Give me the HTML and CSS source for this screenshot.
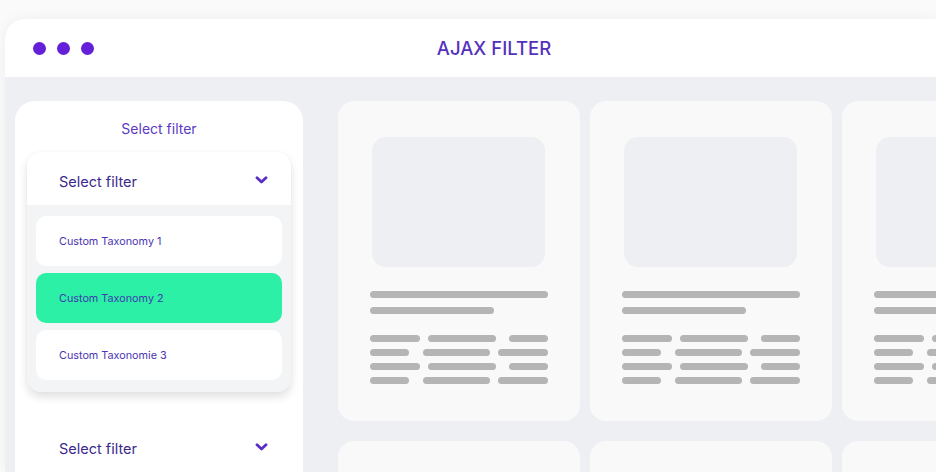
FILE: index.html
```html
<!DOCTYPE html>
<html lang="en">
<head>
<meta charset="utf-8">
<title>Ajax Filter</title>
<link rel="stylesheet" href="styles.css">
</head>
<body>
<div class="window">
  <header class="titlebar">
    <div class="dots"><span class="dot"></span><span class="dot"></span><span class="dot"></span></div>
    <h1 class="title">AJAX FILTER</h1>
  </header>
  <div class="content">
    <aside class="sidebar">
      <div class="sidebar-label">Select filter</div>
      <div class="dropdown open">
        <div class="dropdown-head">
          <span>Select filter</span>
          <svg class="chev" width="13" height="8" viewBox="0 0 13 8"><path d="M2 1.8 L6.5 6 L11 1.8" fill="none" stroke="#5a2dc9" stroke-width="2.8" stroke-linecap="round" stroke-linejoin="round"/></svg>
        </div>
        <ul class="options">
          <li class="option">Custom Taxonomy 1</li>
          <li class="option active">Custom Taxonomy 2</li>
          <li class="option">Custom Taxonomie 3</li>
        </ul>
      </div>
      <div class="dropdown closed">
        <div class="dropdown-head">
          <span>Select filter</span>
          <svg class="chev" width="13" height="8" viewBox="0 0 13 8"><path d="M2 1.8 L6.5 6 L11 1.8" fill="none" stroke="#5a2dc9" stroke-width="2.8" stroke-linecap="round" stroke-linejoin="round"/></svg>
        </div>
      </div>
    </aside>
    <main class="grid">
      <div class="card">
        <div class="thumb"></div>
        <div class="lines title-lines"><i class="l w178"></i><i class="l w124"></i></div>
        <div class="rows">
          <div class="row a"><i class="l"></i><i class="l"></i><i class="l"></i></div>
          <div class="row b"><i class="l"></i><i class="l"></i><i class="l"></i></div>
          <div class="row a"><i class="l"></i><i class="l"></i><i class="l"></i></div>
          <div class="row b"><i class="l"></i><i class="l"></i><i class="l"></i></div>
        </div>
      </div>
      <div class="card">
        <div class="thumb"></div>
        <div class="lines title-lines"><i class="l w178"></i><i class="l w124"></i></div>
        <div class="rows">
          <div class="row a"><i class="l"></i><i class="l"></i><i class="l"></i></div>
          <div class="row b"><i class="l"></i><i class="l"></i><i class="l"></i></div>
          <div class="row a"><i class="l"></i><i class="l"></i><i class="l"></i></div>
          <div class="row b"><i class="l"></i><i class="l"></i><i class="l"></i></div>
        </div>
      </div>
      <div class="card">
        <div class="thumb"></div>
        <div class="lines title-lines"><i class="l w178"></i><i class="l w124"></i></div>
        <div class="rows">
          <div class="row a"><i class="l"></i><i class="l"></i><i class="l"></i></div>
          <div class="row b"><i class="l"></i><i class="l"></i><i class="l"></i></div>
          <div class="row a"><i class="l"></i><i class="l"></i><i class="l"></i></div>
          <div class="row b"><i class="l"></i><i class="l"></i><i class="l"></i></div>
        </div>
      </div>
      <div class="card"></div>
      <div class="card"></div>
      <div class="card"></div>
    </main>
  </div>
</div>
</body>
</html>
```

FILE: styles.css
```css
* { box-sizing: border-box; }
html, body { margin: 0; padding: 0; }
body {
  background: #fafafa;
  width: 936px;
  height: 472px;
  overflow: hidden;
  font-family: Inter, "Noto Sans", "Liberation Sans", sans-serif;
}
.window {
  margin: 19px 0 0 5px;
  width: 931px;
  height: 453px;
  border-radius: 20px 0 0 0;
  background: #eeeff3;
  box-shadow: 0 0 14px rgba(0, 0, 0, 0.05);
  overflow: hidden;
}
.titlebar {
  height: 58px;
  background: #ffffff;
  display: flex;
  align-items: center;
  position: relative;
  padding-left: 28px;
}
.dots { display: flex; gap: 11px; }
.dot {
  width: 13px;
  height: 13px;
  border-radius: 50%;
  background: #6320d8;
}
.title {
  position: absolute;
  left: 0;
  right: -47px;
  top: 0;
  margin: 0;
  line-height: 58px;
  text-align: center;
  font-size: 18.5px;
  font-weight: 500;
  color: #5431bd;
}
.content {
  display: flex;
  align-items: flex-start;
  gap: 35px;
  padding: 24px 0 0 10px;
}
.sidebar {
  width: 288px;
  flex: none;
  background: #ffffff;
  border-radius: 20px;
  padding: 18px 12px 30px;
  min-height: 420px;
}
.sidebar-label {
  text-align: center;
  font-size: 14px;
  line-height: 20px;
  color: #5b3bc4;
  margin-bottom: 13px;
}
.dropdown {
  border-radius: 14px;
  background: #ffffff;
  overflow: hidden;
}
.dropdown.open {
  box-shadow: 0 5px 10px rgba(0, 0, 0, 0.12), 0 0 2px rgba(0, 0, 0, 0.05);
}
.dropdown.closed { margin-top: 27px; }
.dropdown-head {
  height: 53px;
  display: flex;
  align-items: center;
  justify-content: space-between;
  padding: 5px 23px 0 32px;
  font-size: 14.5px;
  color: #3b2a8c;
}
.chev { margin-top: -2px; }
.options {
  list-style: none;
  margin: 0;
  padding: 11px 9px 12px;
  background: #f3f4f6;
  display: flex;
  flex-direction: column;
  gap: 7px;
}
.option {
  height: 50px;
  border-radius: 10px;
  background: #ffffff;
  display: flex;
  align-items: center;
  padding-left: 23px;
  font-size: 10.8px;
  color: #4a34b2;
}
.option.active { background: #2bf0a6; color: #3f3bb0; }
.grid {
  display: grid;
  grid-template-columns: repeat(3, 242px);
  grid-auto-rows: 320px;
  column-gap: 10px;
  row-gap: 20px;
  flex: none;
}
.card {
  background: #f9f9fa;
  border-radius: 16px;
  padding: 36px 32px 0 32px;
}
.thumb {
  width: 173px;
  height: 130px;
  margin-left: 2px;
  border-radius: 14px;
  background: #eeeff3;
}
.l {
  display: block;
  height: 7px;
  border-radius: 4px;
  background: #b5b5b5;
}
.title-lines {
  margin-top: 24px;
  display: flex;
  flex-direction: column;
  gap: 9px;
}
.w178 { width: 178px; }
.w124 { width: 124px; }
.rows {
  margin-top: 21px;
  display: flex;
  flex-direction: column;
  gap: 7px;
  width: 178px;
}
.row { display: flex; justify-content: space-between; }
.row.a .l:nth-child(1) { width: 50px; }
.row.a .l:nth-child(2) { width: 68px; margin-left: 8px; margin-right: auto; }
.row.a .l:nth-child(3) { width: 39px; }
.row.b .l:nth-child(1) { width: 39px; margin-right: auto; }
.row.b .l:nth-child(2) { width: 68px; margin-left: 14px; margin-right: 8px; }
.row.b .l:nth-child(3) { width: 50px; }
```
